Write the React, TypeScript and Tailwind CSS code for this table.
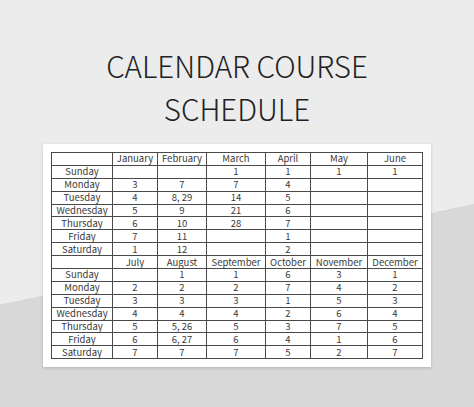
const FIRST_HALF = {
  months: ["January", "February", "March", "April", "May", "June"],
  rows: [
    ["Sunday", "", "", "1", "1", "1", "1"],
    ["Monday", "3", "7", "7", "4", "", ""],
    ["Tuesday", "4", "8, 29", "14", "5", "", ""],
    ["Wednesday", "5", "9", "21", "6", "", ""],
    ["Thursday", "6", "10", "28", "7", "", ""],
    ["Friday", "7", "11", "", "1", "", ""],
    ["Saturday", "1", "12", "", "2", "", ""],
  ],
};

const SECOND_HALF = {
  months: ["July", "August", "September", "October", "November", "December"],
  rows: [
    ["Sunday", "", "1", "1", "6", "3", "1"],
    ["Monday", "2", "2", "2", "7", "4", "2"],
    ["Tuesday", "3", "3", "3", "1", "5", "3"],
    ["Wednesday", "4", "4", "4", "2", "6", "4"],
    ["Thursday", "5", "5, 26", "5", "3", "7", "5"],
    ["Friday", "6", "6, 27", "6", "4", "1", "6"],
    ["Saturday", "7", "7", "7", "5", "2", "7"],
  ],
};

const COL_WIDTHS = ["w-[61px]", "w-[45px]", "w-[49px]", "w-[59px]", "w-[45px]", "w-[57px]", "w-[55px]"];

const cell = "h-[12.9px] p-0 border border-[#4a4a4a] text-center align-middle leading-[11px] whitespace-nowrap";

function Half({ months, rows }: { months: string[]; rows: string[][] }) {
  return (
    <>
      <tr>
        <td className={cell}></td>
        {months.map((m) => (
          <td key={m} className={cell}>
            {m}
          </td>
        ))}
      </tr>
      {rows.map((r, i) => (
        <tr key={i}>
          {r.map((v, j) => (
            <td key={j} className={cell}>
              {v}
            </td>
          ))}
        </tr>
      ))}
    </>
  );
}

export default function App() {
  return (
    <div className="w-[474px] h-[407px] overflow-hidden flex flex-col items-center bg-[linear-gradient(168deg,#ececec_60%,#d8d8d8_60%)]">
      <h1
        className="pt-[44px] text-center text-[29.5px] leading-[42.5px] font-light text-[#222]"
        style={{ fontFamily: '"Noto Sans CJK SC", "Noto Sans", sans-serif' }}
      >
        CALENDAR COURSE
        <br />
        SCHEDULE
      </h1>

      <div className="mt-[15px] w-[388px] bg-white p-[8px] shadow-[0_1px_3px_rgba(0,0,0,0.18)]">
        <table
          className="w-[371px] table-fixed border-collapse text-[9.5px] text-[#3a3a3a]"
          style={{ fontFamily: '"Noto Sans CJK SC", Lato, sans-serif' }}
        >
          <colgroup>
            {COL_WIDTHS.map((w, i) => (
              <col key={i} className={w} />
            ))}
          </colgroup>
          <tbody>
            <Half {...FIRST_HALF} />
            <Half {...SECOND_HALF} />
          </tbody>
        </table>
      </div>
    </div>
  );
}
